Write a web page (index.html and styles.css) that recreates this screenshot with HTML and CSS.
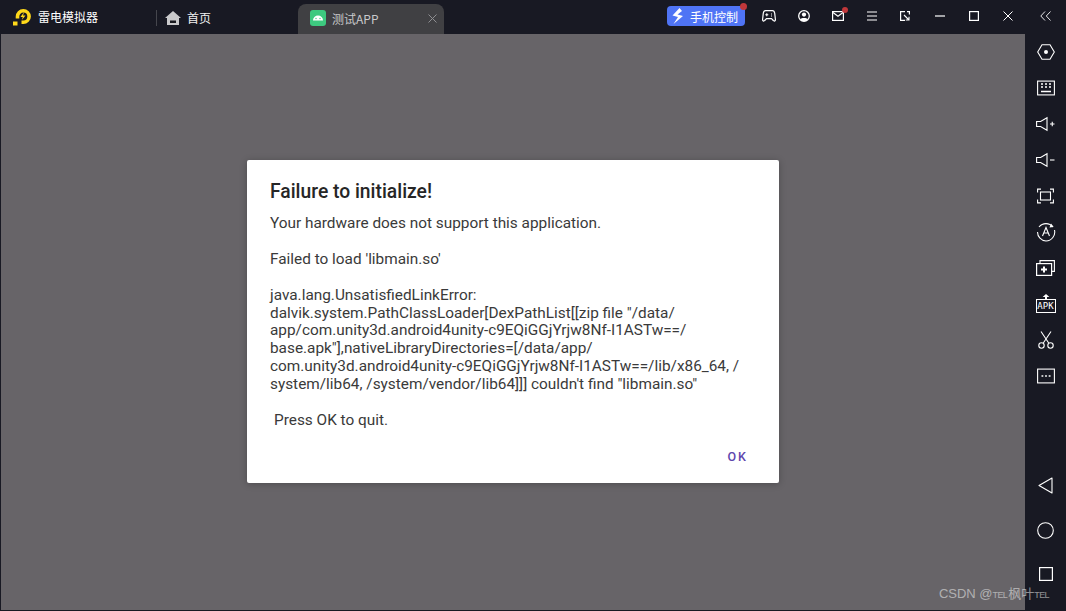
FILE: index.html
```html
<!DOCTYPE html>
<html lang="zh">
<head>
<meta charset="utf-8">
<title>雷电模拟器</title>
<link rel="stylesheet" href="styles.css">
</head>
<body>
<div class="app">
  <header class="topbar">
    <div class="brand">
      <svg class="logo" width="19" height="19" viewBox="0 0 19 19"><path d="M4.500 11.500V9.500A5.800 5.800 0 1 1 10.300 15.300H8.500" fill="none" stroke="#ffd91a" stroke-width="3.600"/><path d="M11.200 5 7.500 10h2.300l-1 3 3.700-4.500H10z" fill="#ffd91a"/><rect x="0" y="14.500" width="4.500" height="4" fill="#ffd91a"/></svg>
      <span class="brand-name">雷电模拟器</span>
    </div>
    <div class="home">
      <svg width="16" height="14" viewBox="0 0 16 14"><path d="M8 0 16 7H14V14H2V7H0z" fill="#c9c9cb"/><rect x="5" y="9.500" width="6" height="2.500" fill="#18191f"/></svg>
      <span>首页</span>
    </div>
    <div class="tab">
      <span class="tab-icon"><svg width="16" height="16" viewBox="0 0 16 16"><path d="M3 10.500a5 5 0 0 1 10 0z" fill="#fff"/><circle cx="6" cy="8.500" r=".7" fill="#3dc97f"/><circle cx="10" cy="8.500" r=".7" fill="#3dc97f"/></svg></span>
      <span class="tab-title">测试APP</span>
      <svg class="tab-close" width="9" height="9" viewBox="0 0 9 9"><path d="M.5.500l8 8M8.500.500l-8 8" stroke="#8f8f92" stroke-width="1"/></svg>
    </div>
    <div class="tools">
      <div class="phone-btn">
        <svg width="14" height="16" viewBox="0 0 14 16"><path d="M8.500 0 1.500 7.500 7 9 2.500 16l9.500-8L6.500 6.500 11 3z" fill="#fff"/></svg>
        <span>手机控制</span>
        <i class="dot dot-btn"></i>
      </div>
      <svg class="t t-game" width="14" height="12" viewBox="0 0 14 12"><path d="M3.500.7h7c1.300 0 1.900.8 2.200 2.500l.7 6c.2 1.800-1.300 2.300-2.100 1.300L9.500 8.700h-5l-1.800 1.800C1.900 11.500.4 11 .6 9.200l.7-6C1.600 1.500 2.200.7 3.500.7z" fill="none" stroke="#fff" stroke-width="1.200"/><path d="M3.300 4.700h3M4.800 3.200v3M9 4h1M9 6h1" stroke="#fff" stroke-width="1.100"/></svg>
      <svg class="t t-user" width="12" height="12" viewBox="0 0 12 12"><circle cx="6" cy="6" r="5.300" fill="none" stroke="#fff" stroke-width="1.300"/><circle cx="6" cy="4.600" r="2.100" fill="#fff"/><path d="M2.300 9.500c1-1.900 6.400-1.900 7.400 0l-2 1.500H4.300z" fill="#fff"/></svg>
      <span class="mail">
        <svg width="12" height="10" viewBox="0 0 12 10"><rect x=".6" y=".6" width="10.800" height="8.800" fill="none" stroke="#fff" stroke-width="1.200"/><path d="M1 1.500l5 3.800 5-3.800" fill="none" stroke="#fff" stroke-width="1.100"/></svg>
        <i class="dot dot-mail"></i>
      </span>
      <svg class="t t-menu" width="10" height="10" viewBox="0 0 10 10"><path d="M0 1h10M0 5h10M0 9h10" stroke="#fff" stroke-width="1.100"/></svg>
      <svg class="t t-fit" width="10" height="10" viewBox="0 0 10 10"><path d="M5 .6H.6v8.800H5M7 .6h2.400V3.500" fill="none" stroke="#fff" stroke-width="1.200"/><path d="M4 4l5 5M9 5.800V9H5.800" fill="none" stroke="#fff" stroke-width="1.100"/></svg>
      <svg class="t t-min" width="10" height="2" viewBox="0 0 10 2"><path d="M0 1h10" stroke="#fff" stroke-width="1.200"/></svg>
      <svg class="t t-max" width="10" height="10" viewBox="0 0 10 10"><rect x=".6" y=".6" width="8.800" height="8.800" fill="none" stroke="#fff" stroke-width="1.200"/></svg>
      <svg class="t t-x" width="10" height="10" viewBox="0 0 10 10"><path d="M.5.500l9 9M9.500.500l-9 9" stroke="#fff" stroke-width="1"/></svg>
      <svg class="t t-back" width="11" height="10" viewBox="0 0 11 10"><path d="M5 .5.800 5 5 9.500M10.500.5 6.300 5l4.200 4.500" fill="none" stroke="#e6e6e8" stroke-width="1"/></svg>
    </div>
  </header>
  <div class="body">
    <main class="stage">
      <section class="dialog">
        <h1 class="dialog-title">Failure to initialize!</h1>
        <div class="dialog-msg">
          <p>Your hardware does not support this application.</p>
          <p>Failed to load 'libmain.so'</p>
          <p>java.lang.UnsatisfiedLinkError:<br>dalvik.system.PathClassLoader[DexPathList[[zip file "/data/<br>app/com.unity3d.android4unity-c9EQiGGjYrjw8Nf-I1ASTw==/<br>base.apk"],nativeLibraryDirectories=[/data/app/<br>com.unity3d.android4unity-c9EQiGGjYrjw8Nf-I1ASTw==/lib/x86_64, /<br>system/lib64, /system/vendor/lib64]]] couldn't find "libmain.so"</p>
          <p class="quit">Press OK to quit.</p>
        </div>
        <div class="dialog-actions"><span class="ok">OK</span></div>
      </section>
    </main>
    <aside class="side">
      <div class="side-top">
        <svg width="18" height="16" viewBox="0 0 18 16"><path d="M5 .7h8L17.300 8 13 15.300H5L.7 8z" fill="none" stroke="#fff" stroke-width="1.100"/><circle cx="9" cy="8" r="2" fill="#fff"/></svg>
        <svg width="18" height="15" viewBox="0 0 18 15"><rect x=".6" y=".6" width="16.800" height="13.800" fill="none" stroke="#fff" stroke-width="1.100"/><path d="M4 3.500h2M8 3.500h2M12 3.500h2M4 6.500h2M8 6.500h2M12 6.500h2M4 11h10" stroke="#fff" stroke-width="1.500"/></svg>
        <svg width="19" height="14" viewBox="0 0 19 14"><path d="M.6 4.500h4L11 .7v12.600L4.600 9.500H.6z" fill="none" stroke="#fff" stroke-width="1.100"/><path d="M14 7h4.500M16.250 4.800v4.400" stroke="#fff" stroke-width="1.100"/></svg>
        <svg width="19" height="14" viewBox="0 0 19 14"><path d="M.6 4.500h4L11 .7v12.600L4.600 9.500H.6z" fill="none" stroke="#fff" stroke-width="1.100"/><path d="M14 7h4.500" stroke="#fff" stroke-width="1.100"/></svg>
        <svg width="17" height="15" viewBox="0 0 17 15"><path d="M.6 4V.6H4M13 .6h3.400V4M16.400 11v3.400H13M4 14.400H.6V11" fill="none" stroke="#fff" stroke-width="1.100"/><rect x="3.500" y="3.500" width="10" height="8" fill="none" stroke="#fff" stroke-width="1.100"/></svg>
        <svg width="20" height="20" viewBox="0 0 20 20"><path d="M3 5a9 9 0 0 1 14 0M18.500 8a9 9 0 0 1-8.500 11 9 9 0 0 1-8.500-9" fill="none" stroke="#fff" stroke-width="1.100"/><path d="M15 1.500 17.500 5 13.500 5.500z" fill="#fff"/><path d="M6.500 14 10 5.500 13.500 14M7.800 11h4.400" fill="none" stroke="#fff" stroke-width="1.100"/></svg>
        <svg width="19" height="16" viewBox="0 0 19 16"><path d="M4 3V.6h14.400v10.800H16" fill="none" stroke="#fff" stroke-width="1.100"/><rect x=".6" y="3.600" width="15" height="11.800" fill="none" stroke="#fff" stroke-width="1.200"/><path d="M5 9.500h6M8 6.500v6" stroke="#fff" stroke-width="2"/></svg>
        <span class="apk">
          <svg width="8" height="6" viewBox="0 0 8 6"><path d="M4 0 8 3.500H5.200V6H2.800V3.500H0z" fill="#fff"/></svg>
          <span class="apk-box">APK</span>
        </span>
        <svg width="16" height="18" viewBox="0 0 16 18"><path d="M3 .5 10.700 12M13 .5 5.300 12" fill="none" stroke="#fff" stroke-width="1.100"/><circle cx="3.500" cy="14.500" r="2.700" fill="none" stroke="#fff" stroke-width="1.100"/><circle cx="12.500" cy="14.500" r="2.700" fill="none" stroke="#fff" stroke-width="1.100"/></svg>
        <svg width="18" height="15" viewBox="0 0 18 15"><rect x=".6" y=".6" width="16.800" height="13.800" fill="none" stroke="#fff" stroke-width="1.100"/><path d="M4.500 7.500h1.800M8.100 7.500h1.800M11.700 7.500h1.800" stroke="#fff" stroke-width="1.600"/></svg>
      </div>
      <div class="side-bottom">
        <svg width="15" height="17" viewBox="0 0 15 17"><path d="M14 1v15L1 8.500z" fill="none" stroke="#fff" stroke-width="1.100" stroke-linejoin="round"/></svg>
        <svg width="17" height="17" viewBox="0 0 17 17"><circle cx="8.500" cy="8.500" r="7.800" fill="none" stroke="#fff" stroke-width="1.100"/></svg>
        <svg width="14" height="14" viewBox="0 0 14 14"><rect x=".6" y=".6" width="12.800" height="12.800" fill="none" stroke="#fff" stroke-width="1.200"/></svg>
      </div>
    </aside>
  </div>
  <div class="watermark">CSDN @<small>TEL</small>枫叶<small>TEL</small></div>
</div>
</body>
</html>
```
FILE: styles.css
```css
html, body { margin: 0; padding: 0; height: 100%; }
body { background: #181923; overflow: hidden; font-family: "Noto Sans CJK SC", "Noto Sans", sans-serif; }
.app { position: relative; width: 1066px; height: 611px; display: flex; flex-direction: column; }

.topbar { height: 34px; flex: none; display: flex; align-items: center; background: #181923; color: #fff; font-size: 12px; }
.brand { display: flex; align-items: center; width: 156px; padding-left: 13px; box-sizing: border-box; }
.logo { margin-top: -1px; }
.brand-name { margin-left: 6px; margin-top: -1px; }
.home { display: flex; align-items: center; height: 16px; margin-top: 1px; padding-left: 8px; border-left: 1px solid #45464d; width: 131px; box-sizing: border-box; }
.home span { margin-left: 6px; color: #f0f0f0; }
.tab { align-self: flex-end; display: flex; align-items: center; width: 146px; height: 30px; box-sizing: border-box; padding: 0 7px 2px 12px; margin-left: 11px; background: #404043; border-radius: 8px 8px 0 0; color: #c9c9cb; }
.tab-icon { width: 16px; height: 16px; flex: none; border-radius: 3px; background: #3dc97f; display: flex; align-items: center; justify-content: center; overflow: hidden; }
.tab-title { margin-left: 6px; flex: 1; }

.tools { display: flex; align-items: center; margin-top: -2px; margin-left: 223px; flex: 1; position: relative; height: 32px; }
.tools > .t, .mail { flex: none; }
.phone-btn { position: relative; display: flex; align-items: center; box-sizing: border-box; width: 78px; height: 20px; padding-left: 4px; background: #4f74f5; border-radius: 4px; font-size: 12px; color: #fff; }
.phone-btn span { margin-left: 5px; white-space: nowrap; }
.dot { position: absolute; border-radius: 50%; background: #c0373a; }
.dot-btn { width: 7px; height: 7px; right: -2px; top: -3px; }
.dot-mail { width: 6px; height: 6px; right: -4px; top: -4px; }
.t-game { margin-left: 17px; }
.t-user { margin-left: 22px; }
.mail { position: relative; display: flex; margin-left: 22px; }
.t-menu { margin-left: 23px; }
.t-fit { margin-left: 23px; }
.t-min { margin-left: 25px; }
.t-max { margin-left: 24px; }
.t-x { margin-left: 24px; }
.t-back { margin-left: 27px; }

.body { flex: 1; display: flex; min-height: 0; }
.stage { flex: 1; margin: 0 0 1px 1px; background: #676468; display: flex; align-items: center; justify-content: center; }
.side { width: 41px; flex: none; background: #181923; display: flex; flex-direction: column; justify-content: space-between; align-items: center; padding: 8px 0 30px; box-sizing: border-box; }
.side-top { display: flex; flex-direction: column; align-items: center; }
.side-top > * { height: 20px; margin-bottom: 16px; display: flex; flex: none; }
.side-bottom { display: flex; flex-direction: column; align-items: center; gap: 28px; }
.apk { flex-direction: column; align-items: center; position: relative; }
.apk svg { display: block; height: 5px; flex: none; }
.apk-box { display: block; width: 20px; height: 14px; flex: none; box-sizing: border-box; border: 1px solid #fff; color: #fff; font: 400 9px/12px "DejaVu Sans Mono", monospace; text-align: center; }

.dialog { width: 532px; height: 323px; margin-bottom: 1px; box-sizing: border-box; padding: 20px 23px 0; background: #fff; border-radius: 2px; box-shadow: 0 1px 7px rgba(0,0,0,.25); display: flex; flex-direction: column; font-family: Roboto, sans-serif; }
.dialog-title { margin: 0; font-size: 19.300px; line-height: 24px; font-weight: 500; color: #262626; }
.dialog-msg { margin-top: 11px; font-size: 15.370px; line-height: 17.900px; color: #3a3a3a; }
.dialog-msg p { margin: 0 0 17.900px; white-space: nowrap; }
.quit { padding-left: 4px; }
.dialog-actions { margin-top: auto; display: flex; justify-content: flex-end; padding: 0 8px 18px 0; }
.ok { font-size: 12.500px; font-weight: 500; letter-spacing: 2px; line-height: 16px; color: #5e46ad; }

.watermark { position: absolute; right: 16px; bottom: 9px; display: flex; align-items: baseline; height: 16px; font: 13px/16px "Liberation Sans", "Noto Sans CJK SC", sans-serif; color: rgba(225,225,225,.62); white-space: pre; }
.watermark small { font-size: 9px; letter-spacing: -.6px; margin-right: 1px; }
```
